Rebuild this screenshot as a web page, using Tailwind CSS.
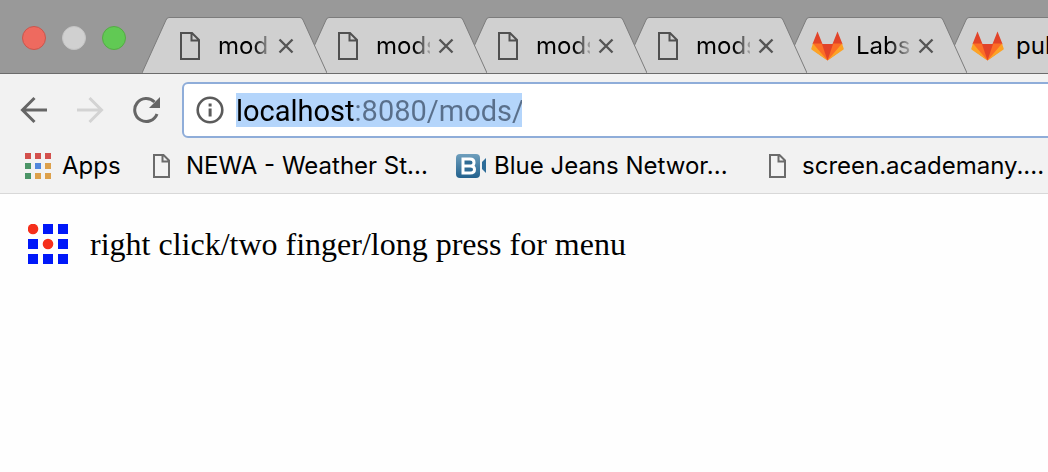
<!DOCTYPE html>
<html lang="en">
<head>
    <meta charset="UTF-8">
    <meta name="viewport" content="width=device-width, initial-scale=1.0">
    <title>mods</title>
    <script src="https://cdn.jsdelivr.net/npm/@tailwindcss/browser@4"></script>
</head>
<body class="min-h-screen overflow-x-hidden bg-[#fefefe] font-[Inter,sans-serif] text-black">

    <!-- Shared icons -->
    <svg class="hidden">
        <symbol id="tab-shape" viewBox="0 0 185 56">
            <path d="M0 56L24 3Q25 .5 27 .5H158Q160 .5 161 3L185 56Z" fill="#d0d0d0"/>
            <path d="M0 56L24 3Q25 .5 27 .5H158Q160 .5 161 3L185 56" fill="none" stroke="#7c7c7c"/>
        </symbol>
        <symbol id="file" viewBox="0 0 20 28">
            <path d="M1 1H12L19 8V27H1ZM11.500 1V8.500H19" fill="none" stroke="#505050" stroke-width="2"/>
        </symbol>
        <symbol id="file-small" viewBox="0 0 17 24">
            <path d="M1 1H10.500L16 6.500V23H1ZM9.500 1V7.500H16" fill="none" stroke="#6b6b6b" stroke-width="2"/>
        </symbol>
        <symbol id="close" viewBox="0 0 16 16">
            <path d="M1.500 1.500L14.500 14.500M14.500 1.500L1.500 14.500" fill="none" stroke="#555" stroke-width="2.400"/>
        </symbol>
        <symbol id="gitlab" viewBox="0 0 33 30">
            <path fill="#e24329" d="M1.500 13L6.500 .5L11.500 13L21.500 13L26.500 .5L31.500 13L16.500 29.500Z"/>
            <path fill="#fc6d26" d="M16.500 29.500L10.800 12.500H2L5 21ZM16.500 29.500L22.200 12.500H31L28 21Z"/>
            <path fill="#fca326" d="M2 12.500L.3 17.500Q.1 18.300.8 18.800L16.500 29.500ZM31 12.500L32.700 17.500Q32.900 18.300 32.200 18.800L16.500 29.500Z"/>
        </symbol>
    </svg>

    <!-- Tab strip -->
    <header class="flex h-[74px] items-end overflow-hidden border-b border-[#6c6c6c] bg-[#999]">
        <div class="flex shrink-0 gap-4 self-start pt-[26px] pl-[22px]">
            <button aria-label="Close window" class="size-6 rounded-full border border-[#c9564d] bg-[#ee6a5f]"></button>
            <button aria-label="Minimize window" class="size-6 rounded-full border border-[#c4c4c4] bg-[#d0d0d0]"></button>
            <button aria-label="Zoom window" class="size-6 rounded-full border border-[#55ab45] bg-[#61c954]"></button>
        </div>
        <nav class="ml-4 flex shrink-0">
            <div class="relative z-60 h-14 w-[185px] shrink-0">
                <svg class="absolute inset-0 h-full w-full"><use href="#tab-shape"/></svg>
                <div class="relative flex h-full items-center pt-px pr-[33px] pl-[38px]">
                    <svg class="h-7 w-5 shrink-0"><use href="#file"/></svg>
                    <a href="#" class="ml-[18px] bg-linear-to-r from-black from-70% to-black/30 bg-clip-text text-[24px] leading-8 whitespace-nowrap text-transparent">mod</a>
                    <button aria-label="Close tab" class="ml-auto"><svg class="size-4"><use href="#close"/></svg></button>
                </div>
            </div>
            <div class="relative z-50 -ml-[25px] h-14 w-[185px] shrink-0">
                <svg class="absolute inset-0 h-full w-full"><use href="#tab-shape"/></svg>
                <div class="relative flex h-full items-center pt-px pr-[33px] pl-[36px]">
                    <svg class="h-7 w-5 shrink-0"><use href="#file"/></svg>
                    <a href="#" class="ml-[18px] w-[54px] overflow-hidden bg-linear-to-r from-black from-70% to-black/20 bg-clip-text text-[24px] leading-8 whitespace-nowrap text-transparent">mods</a>
                    <button aria-label="Close tab" class="ml-auto"><svg class="size-4"><use href="#close"/></svg></button>
                </div>
            </div>
            <div class="relative z-40 -ml-[25px] h-14 w-[185px] shrink-0">
                <svg class="absolute inset-0 h-full w-full"><use href="#tab-shape"/></svg>
                <div class="relative flex h-full items-center pt-px pr-[33px] pl-[36px]">
                    <svg class="h-7 w-5 shrink-0"><use href="#file"/></svg>
                    <a href="#" class="ml-[18px] w-[54px] overflow-hidden bg-linear-to-r from-black from-70% to-black/20 bg-clip-text text-[24px] leading-8 whitespace-nowrap text-transparent">mods</a>
                    <button aria-label="Close tab" class="ml-auto"><svg class="size-4"><use href="#close"/></svg></button>
                </div>
            </div>
            <div class="relative z-30 -ml-[25px] h-14 w-[185px] shrink-0">
                <svg class="absolute inset-0 h-full w-full"><use href="#tab-shape"/></svg>
                <div class="relative flex h-full items-center pt-px pr-[33px] pl-[36px]">
                    <svg class="h-7 w-5 shrink-0"><use href="#file"/></svg>
                    <a href="#" class="ml-[18px] w-[54px] overflow-hidden bg-linear-to-r from-black from-70% to-black/20 bg-clip-text text-[24px] leading-8 whitespace-nowrap text-transparent">mods</a>
                    <button aria-label="Close tab" class="ml-auto"><svg class="size-4"><use href="#close"/></svg></button>
                </div>
            </div>
            <div class="relative z-20 -ml-[25px] h-14 w-[185px] shrink-0">
                <svg class="absolute inset-0 h-full w-full"><use href="#tab-shape"/></svg>
                <div class="relative flex h-full items-center pt-px pr-[33px] pl-[29px]">
                    <svg class="h-[30px] w-[33px] shrink-0"><use href="#gitlab"/></svg>
                    <a href="#" class="ml-3 bg-linear-to-r from-black from-60% to-black/20 bg-clip-text text-[24px] leading-8 whitespace-nowrap text-transparent">Labs</a>
                    <button aria-label="Close tab" class="ml-auto"><svg class="size-4"><use href="#close"/></svg></button>
                </div>
            </div>
            <div class="relative z-10 -ml-[25px] h-14 w-[185px] shrink-0">
                <svg class="absolute inset-0 h-full w-full"><use href="#tab-shape"/></svg>
                <div class="relative flex h-full items-center pt-px pr-[33px] pl-[29px]">
                    <svg class="h-[30px] w-[33px] shrink-0"><use href="#gitlab"/></svg>
                    <a href="#" class="ml-3 text-[24px] leading-8 whitespace-nowrap">pul</a>
                </div>
            </div>
        </nav>
    </header>

    <!-- Toolbar -->
    <div class="overflow-hidden border-b border-[#d8d8d8] bg-[#f2f2f2]">
        <div class="flex items-center pt-2 pl-5">
            <button aria-label="Back"><svg class="size-7" viewBox="0 0 28 28" fill="none" stroke="#666" stroke-width="3"><path d="M27 14H3M14.500 2L2.500 14L14.500 26"/></svg></button>
            <button aria-label="Forward" class="ml-7"><svg class="size-7" viewBox="0 0 28 28" fill="none" stroke="#d3d3d3" stroke-width="3"><path d="M1 14H25M13.500 2L25.500 14L13.500 26"/></svg></button>
            <button aria-label="Reload" class="ml-7"><svg class="size-7" viewBox="0 0 28 28"><path d="M22.500 6A11.500 11.500 0 1 0 25 18" fill="none" stroke="#666" stroke-width="3"/><path d="M28 1V12H17Z" fill="#666"/></svg></button>
            <label class="-mr-2 ml-[22px] flex h-14 flex-1 items-center rounded-md border-2 border-[#8fadd9] bg-white pl-3">
                <svg class="size-7 shrink-0" viewBox="0 0 28 28"><circle cx="14" cy="14" r="12.300" fill="none" stroke="#5b5b5b" stroke-width="2.600"/><path d="M12.600 7.500h3v3h-3zM12.600 12.500h3v8h-3z" fill="#5b5b5b"/></svg>
                <span class="ml-3 flex h-[34px] bg-[#b4d5fb]">
                    <input type="text" aria-label="Address" value="localhost:8080/mods/" class="w-[286px] bg-linear-to-r from-black from-[118px] to-[#596f8b] to-[118px] bg-clip-text pt-px font-[Roboto,sans-serif] text-[29px] leading-[34px] text-transparent outline-none">
                </span>
            </label>
        </div>

        <!-- Bookmarks -->
        <nav class="flex h-[55px] items-center pl-[25px] text-[24px] leading-8 whitespace-nowrap">
            <a href="#" class="flex w-[128px] shrink-0 items-center gap-[11px]">
                <svg class="size-[26px] shrink-0" viewBox="0 0 26 26">
                    <path fill="#d3504c" d="M0 0h6v6H0zM10 0h6v6h-6zM20 0h6v6h-6z"/>
                    <path fill="#4b9466" d="M0 10h6v6H0zM0 20h6v6H0z"/>
                    <path fill="#5187dc" d="M10 10h6v6h-6z"/>
                    <path fill="#dda04a" d="M20 10h6v6h-6zM10 20h6v6h-6zM20 20h6v6h-6z"/>
                </svg>
                Apps
            </a>
            <a href="#" class="flex w-[303px] shrink-0 items-center gap-4">
                <svg class="h-6 w-[17px] shrink-0"><use href="#file-small"/></svg>
                NEWA - Weather St...
            </a>
            <a href="#" class="flex w-[313px] shrink-0 items-center gap-2">
                <svg class="h-6 w-[30px] shrink-0" viewBox="0 0 30 24">
                    <defs><linearGradient id="jeans" x2="0" y2="1"><stop stop-color="#6f9fbd"/><stop offset="1" stop-color="#22618d"/></linearGradient></defs>
                    <rect width="24" height="24" rx="4" fill="url(#jeans)"/>
                    <path d="M7 5H14Q18 5 18 8.500Q18 11 16 12Q18.500 13 18.500 15.500Q18.500 19 14 19H7Z" fill="#2f6b94" stroke="#fff" stroke-width="3"/>
                    <path d="M7 12H16" stroke="#fff" stroke-width="3"/>
                    <path d="M30 4V19L26 15V8Z" fill="#2d6d99"/>
                </svg>
                Blue Jeans Networ...
            </a>
            <a href="#" class="flex shrink-0 items-center gap-4">
                <svg class="h-6 w-[17px] shrink-0"><use href="#file-small"/></svg>
                screen.academany....
            </a>
        </nav>
    </div>

    <!-- Page -->
    <main class="flex items-center gap-[22px] px-7 pt-[30px] font-['Liberation_Serif',serif] text-[32px] leading-10">
        <svg class="size-10 shrink-0" viewBox="0 0 40 40">
            <path fill="#0018f9" d="M15 0h10v10H15zM30 0h10v10H30zM0 15h10v10H0zM30 15h10v10H30zM0 30h10v10H0zM15 30h10v10H15zM30 30h10v10H30z"/>
            <circle cx="5" cy="5" r="5.300" fill="#f52f1b"/>
            <circle cx="20" cy="20" r="5.300" fill="#f52f1b"/>
        </svg>
        <p>right click/two finger/long press for menu</p>
    </main>
</body>
</html>
